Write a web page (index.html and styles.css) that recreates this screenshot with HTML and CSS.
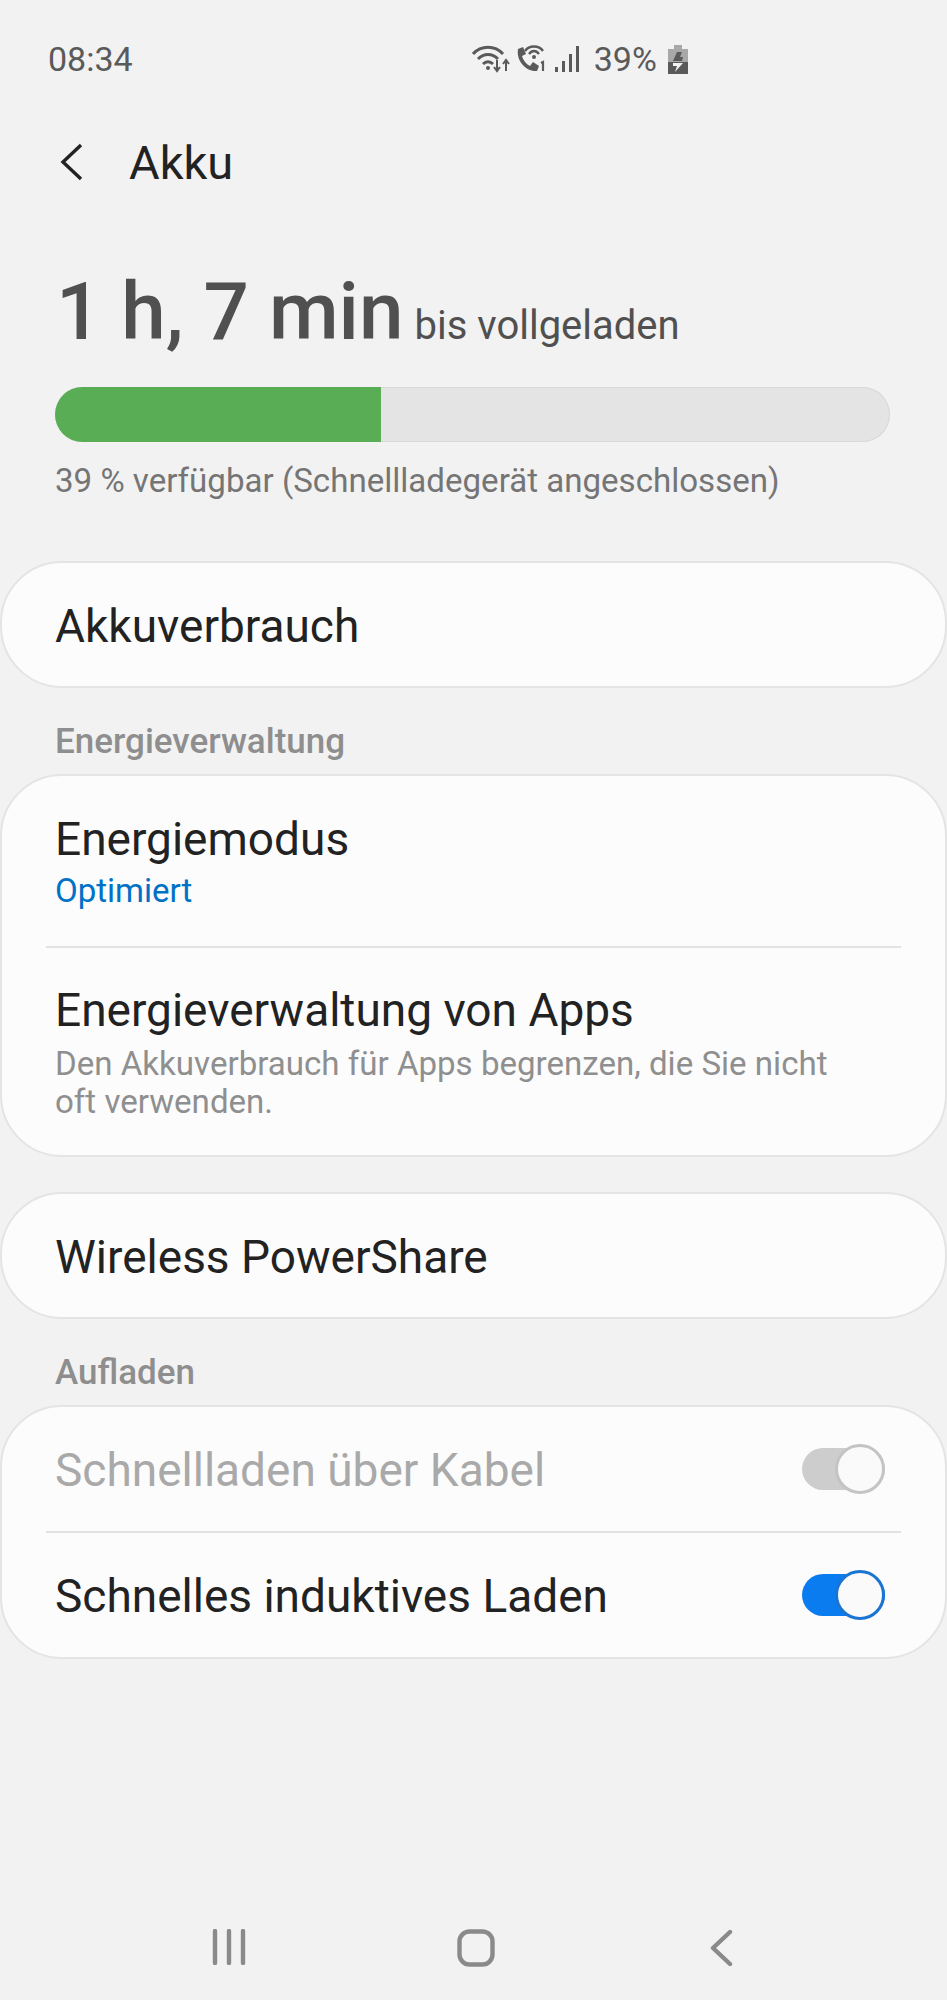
FILE: index.html
```html
<!DOCTYPE html>
<html>
<head>
  <meta charset="UTF-8">
  <title>Akku</title>
  <link rel="stylesheet" href="styles.css">
</head>
<body>
  <div class="status-bar">
    <span class="clock">08:34</span>
    <div class="status-icons">
      <svg class="ic-wifi" width="40" height="30" viewBox="0 0 40 30" fill="none" stroke="#5a5a5a" stroke-width="3">
        <path d="M1 10C9 1 23 1 31 10"/>
        <path d="M6 15C12 9 20 9 26 15"/>
        <path d="M11 20C14 17 18 17 21 20"/>
        <circle cx="16" cy="24" r="2" fill="#5a5a5a" stroke="none"/>
        <path d="M25 16V26M22 23L25 27L28 23" stroke-width="2"/>
        <path d="M34 27V17M31 20L34 16L37 20" stroke-width="2"/>
      </svg>
      <svg class="ic-call" width="32" height="30" viewBox="0 0 32 30" fill="none" stroke="#5a5a5a">
        <path d="M4 5L9 3L12 10L8 12C9 16 12 20 16 22L19 18L25 22L23 27C12 28 2 17 4 5Z" fill="#5a5a5a" stroke="none"/>
        <path d="M11 7C15 1 25 1 29 7" stroke-width="2.4"/>
        <path d="M15 10C18 6 22 6 25 10" stroke-width="2.4"/>
        <circle cx="20" cy="13" r="2" fill="#5a5a5a" stroke="none"/>
        <path d="M27 19L29 18V27" stroke-width="2.2"/>
      </svg>
      <svg class="ic-signal" width="26" height="28" viewBox="0 0 26 28" fill="#5a5a5a">
        <rect x="0" y="22" width="3" height="5"/>
        <rect x="7" y="16" width="3" height="11"/>
        <rect x="14" y="9" width="3" height="18"/>
        <rect x="21" y="1" width="3" height="26"/>
      </svg>
      <span class="percent">39%</span>
      <svg class="ic-battery" width="20" height="29" viewBox="0 0 20 29">
        <rect x="6" y="0" width="8" height="4" fill="#a8a8a8"/>
        <rect x="0" y="4" width="20" height="13" fill="#a8a8a8"/>
        <rect x="0" y="17" width="20" height="12" fill="#5a5a5a"/>
        <path d="M9 7H14L12 12H15L14 16H5Z" fill="#5a5a5a"/>
        <path d="M5 18H15L7 27L9 21H5Z" fill="#f2f2f2"/>
      </svg>
    </div>
  </div>

  <div class="app-bar">
    <svg class="back" width="24" height="38" viewBox="0 0 24 38" fill="none" stroke="#222" stroke-width="3.4">
      <path d="M21 2L3 19L21 36"/>
    </svg>
    <span class="app-title">Akku</span>
  </div>

  <div class="summary">
    <div class="time-left"><span class="hours">1 h, 7 min</span><span class="until">bis vollgeladen</span></div>
    <div class="bar"><div class="bar-fill" style="width: 39%"></div></div>
    <div class="available">39 % verfügbar (Schnellladegerät angeschlossen)</div>
  </div>

  <div class="card first-card">
    <div class="row row-single"><span class="row-title">Akkuverbrauch</span></div>
  </div>

  <div class="section-label">Energieverwaltung</div>
  <div class="card">
    <div class="row row-mode">
      <span class="row-title">Energiemodus</span>
      <span class="row-value">Optimiert</span>
    </div>
    <div class="divider"></div>
    <div class="row row-apps">
      <span class="row-title">Energieverwaltung von Apps</span>
      <span class="row-sub">Den Akkuverbrauch für Apps begrenzen, die Sie nicht oft verwenden.</span>
    </div>
  </div>

  <div class="card spaced-card">
    <div class="row row-single"><span class="row-title">Wireless PowerShare</span></div>
  </div>

  <div class="section-label">Aufladen</div>
  <div class="card">
    <div class="row row-toggle">
      <span class="row-title disabled">Schnellladen über Kabel</span>
      <div class="switch switch-off"><div class="knob"></div></div>
    </div>
    <div class="divider"></div>
    <div class="row row-toggle">
      <span class="row-title">Schnelles induktives Laden</span>
      <div class="switch switch-on"><div class="knob"></div></div>
    </div>
  </div>

  <div class="nav-bar">
    <svg width="38" height="36" viewBox="0 0 38 36" fill="none" stroke="#8a8a8a" stroke-width="4.400" stroke-linecap="round">
      <path d="M5 2V34M19 2V34M33 2V34"/>
    </svg>
    <svg class="nav-home" width="38" height="38" viewBox="0 0 38 38" fill="none" stroke="#8a8a8a" stroke-width="4.400">
      <rect x="2.500" y="2.500" width="33" height="33" rx="10"/>
    </svg>
    <svg width="24" height="38" viewBox="0 0 24 38" fill="none" stroke="#8a8a8a" stroke-width="4.400" stroke-linecap="round" stroke-linejoin="round">
      <path d="M21 3L4 19L21 35"/>
    </svg>
  </div>
</body>
</html>
```

FILE: styles.css
```css
body {
  margin: 0;
  height: 2000px;
  overflow: hidden;
  background-color: #f2f2f2;
  font-family: Roboto, sans-serif;
  color: #222;
  display: flex;
  flex-direction: column;
}
.status-bar {
  height: 60px;
  margin-top: 29px;
  padding: 0 48px;
  display: flex;
  align-items: center;
  color: #5a5a5a;
  font-size: 34px;
}
.status-icons {
  margin-left: 343px;
  display: flex;
  align-items: center;
}
.ic-wifi {
  margin-left: -4px;
}
.ic-call {
  margin-left: 2px;
}
.ic-signal {
  margin-left: 9px;
}
.percent {
  margin-left: 13px;
}
.ic-battery {
  margin-left: 11px;
}
.app-bar {
  height: 72px;
  margin-top: 37px;
  padding-left: 60px;
  display: flex;
  align-items: center;
}
.app-title {
  margin-left: 45px;
  font-size: 47px;
}
.summary {
  margin-top: 67px;
  padding: 0 57px 0 55px;
}
.time-left {
  height: 94px;
  display: flex;
  align-items: baseline;
  color: #505050;
}
.hours {
  margin-left: 1px;
  font-size: 80px;
  font-weight: 500;
  line-height: 94px;
}
.until {
  margin-left: 11px;
  font-size: 40px;
}
.bar {
  margin-top: 28px;
  height: 55px;
  border-radius: 28px;
  background-color: #e4e4e4;
  box-shadow: inset 0 0 0 1px #d8d8d8;
  overflow: hidden;
}
.bar-fill {
  height: 100%;
  background-color: #58ad55;
}
.available {
  margin-top: 19px;
  font-size: 33.100px;
  line-height: 40px;
  white-space: nowrap;
  color: #757575;
}
.card {
  background-color: #fcfcfc;
  border: 2px solid #e4e4e4;
  border-radius: 62px;
}
.first-card {
  margin-top: 60px;
}
.spaced-card {
  margin-top: 35px;
}
.row {
  padding: 0 53px;
  display: flex;
}
.row-title {
  font-size: 46px;
  line-height: 54px;
  color: #222;
}
.row-title.disabled {
  color: #a9a9a9;
}
.row-single {
  height: 123px;
  align-items: center;
}
.row-single .row-title {
  margin-top: 3px;
}
.row-mode {
  flex-direction: column;
  height: 170px;
  padding-top: 36px;
  box-sizing: border-box;
}
.row-value {
  font-size: 33px;
  line-height: 40px;
  margin-top: 5px;
  color: #0072c6;
}
.row-apps {
  flex-direction: column;
  height: 207px;
  padding-top: 35px;
  box-sizing: border-box;
}
.row-sub {
  max-width: 800px;
  font-size: 33.100px;
  line-height: 38px;
  margin-top: 8px;
  color: #8f8f8f;
}
.row-toggle {
  height: 124px;
  align-items: center;
  justify-content: space-between;
  padding-right: 60px;
}
.row-toggle .row-title {
  margin-top: 2px;
}
.divider {
  height: 2px;
  margin: 0 44px;
  background-color: #e2e2e2;
}
.section-label {
  height: 86px;
  box-sizing: border-box;
  padding: 34px 0 0 55px;
  font-size: 35px;
  line-height: 40px;
  font-weight: 500;
  color: #8e8e8e;
}
.switch {
  width: 83px;
  height: 42px;
  border-radius: 21px;
  display: flex;
  align-items: center;
  justify-content: flex-end;
}
.switch-off {
  background-color: #cdcdcd;
}
.switch-on {
  background-color: #0a7cf0;
}
.knob {
  width: 44px;
  height: 44px;
  flex: none;
  border-radius: 50%;
  background-color: #fafafa;
  border: 3px solid #c4c4c4;
}
.switch-on .knob {
  border-color: #1a74d2;
}
.nav-bar {
  margin-top: auto;
  height: 71px;
  padding: 0 214px 0 210px;
  display: flex;
  align-items: flex-start;
  justify-content: space-between;
}
.nav-home {
  margin-right: 6px;
}
```
